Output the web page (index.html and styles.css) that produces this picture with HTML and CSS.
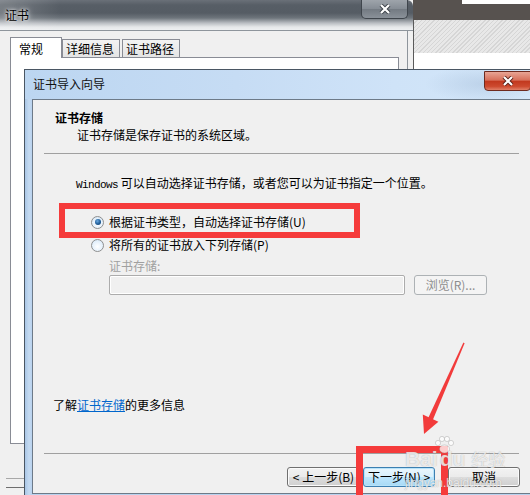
FILE: index.html
```html
<!DOCTYPE html>
<html lang="zh-CN">
<head>
    <meta charset="UTF-8">
    <title>证书导入向导</title>
    <link rel="stylesheet" href="styles.css">
</head>
<body>
<div class="desktop">

    <!-- desktop behind the windows -->
    <div class="desk-right">
        <div class="desk-bar"><span class="desk-strip"></span></div>
        <div class="desk-hatch"></div>
        <div class="desk-white"></div>
    </div>

    <!-- background window: 证书 -->
    <div class="cert-window">
        <div class="win-title">
            <span class="win-caption">证书</span>
            <span class="win-close">
                <svg width="12" height="10" viewBox="0 0 12 10"><path d="M2 1 L10 9 M10 1 L2 9" stroke="#3b4148" stroke-width="4"/><path d="M2 1 L10 9 M10 1 L2 9" stroke="#fff" stroke-width="2.2"/></svg>
            </span>
        </div>
        <div class="win-body">
            <div class="tabs">
                <span class="tab active">常规</span>
                <span class="tab">详细信息</span>
                <span class="tab">证书路径</span>
            </div>
            <div class="tab-panel"></div>
            <div class="win-footer"></div>
        </div>
    </div>

    <!-- wizard dialog -->
    <div class="wizard">
        <div class="wiz-title">
            <span class="wiz-caption">证书导入向导</span>
            <span class="wiz-close">
                <svg width="12" height="10" viewBox="0 0 12 10"><path d="M2 1 L10 9 M10 1 L2 9" stroke="#5a2018" stroke-width="4"/><path d="M2 1 L10 9 M10 1 L2 9" stroke="#fff" stroke-width="2.2"/></svg>
            </span>
        </div>
        <div class="wiz-client">
            <div class="wiz-header">
                <div class="wiz-heading">证书存储</div>
                <div class="wiz-sub">证书存储是保存证书的系统区域。</div>
            </div>
            <div class="rule"></div>

            <div class="intro"><span class="mono">Windows</span> 可以自动选择证书存储，或者您可以为证书指定一个位置。</div>

            <div class="radio first"><span class="dot checked"></span>根据证书类型，自动选择证书存储(U)</div>
            <div class="radio"><span class="dot"></span>将所有的证书放入下列存储(P)</div>

            <div class="store-label">证书存储:</div>
            <div class="store-row">
                <span class="store-input"></span>
                <span class="browse">浏览(R)...</span>
            </div>

            <div class="more">了解<a href="#">证书存储</a>的更多信息</div>
            <div class="rule bottom"></div>

            <div class="buttons">
                <span class="btn back">&lt; 上一步(B)</span>
                <span class="btn next">下一步(N) &gt;</span>
                <span class="btn cancel">取消</span>
            </div>
        </div>
    </div>

    <!-- annotations drawn over the screenshot -->
    <div class="mark mark-radio"></div>
    <div class="mark mark-next"></div>
    <svg class="arrow" width="530" height="495" viewBox="0 0 530 495">
        <polygon points="463.4,342.6 464.6,343.2 432.8,420 428.2,418" fill="#f23b3b"/>
        <polygon points="424,434 422.8,414.6 438.4,421.8" fill="#f23b3b"/>
    </svg>

    <div class="watermark">
        <div class="wm-logo">Bai<svg class="paw" width="20" height="18" viewBox="0 0 20 18"><circle cx="4" cy="7" r="2.6"/><circle cx="8" cy="3" r="2.6"/><circle cx="13" cy="3" r="2.6"/><circle cx="17" cy="7" r="2.6"/><ellipse cx="10.5" cy="13" rx="5" ry="4"/></svg>du <span class="wm-cn">经验</span></div>
        <div class="wm-url">jingyan.baidu.com</div>
    </div>
</div>
</body>
</html>
```

FILE: styles.css
```css
body {
    margin: 0;
    font-family: "Noto Sans CJK SC", "Liberation Sans", sans-serif;
    font-size: 12px;
    line-height: 16px;
    color: #000;
    background-color: #f0f0f0;
    overflow: hidden;
}
.desktop {
    position: relative;
    width: 530px;
    height: 495px;
    overflow: hidden;
}

/* desktop strip on the right */
.desk-right {
    position: absolute;
    left: 413px;
    top: 0;
    width: 117px;
}
.desk-bar {
    height: 20px;
    background-color: #57524f;
    display: flex;
    justify-content: flex-end;
}
.desk-strip {
    width: 68px;
    height: 4px;
    background-color: #fff;
}
.desk-hatch {
    height: 33px;
    border-left: 1px solid #5a5a5a;
    background: repeating-linear-gradient(135deg, #e8e8e8 0, #e8e8e8 2px, #d6d6d6 2px, #d6d6d6 3px);
}
.desk-white {
    height: 17px;
    border-left: 1px solid #5a5a5a;
    background-color: #fff;
}

/* background window */
.cert-window {
    position: absolute;
    left: 0;
    top: 0;
    width: 413px;
    height: 495px;
    background-color: #f0f0f0;
}
.win-title {
    height: 30px;
    display: flex;
    justify-content: space-between;
    align-items: flex-start;
    border-top-right-radius: 6px;
    border-bottom: 1px solid #8e959c;
    background:
        linear-gradient(90deg, rgba(255,255,255,0.2), rgba(255,255,255,0) 60px),
        linear-gradient(to bottom, #6a7078 0, #575e66 5px, #555c64 13px, #6e757c 18px, #b9bdc2 23px, #e6e8ea 27px, #eef0f2 30px);
}
.win-caption {
    padding: 7px 0 0 5px;
    text-shadow: 0 0 6px #fff, 0 0 3px #fff;
}
.win-close {
    width: 45px;
    height: 18px;
    margin-right: 5px;
    border: 1px solid #3f454c;
    border-top: none;
    border-radius: 0 0 5px 5px;
    background: linear-gradient(to bottom, #9ea4ab, #858c94 50%, #737a82 51%, #8a9199);
    display: flex;
    align-items: center;
    justify-content: center;
}
.win-body {
    padding: 6px 0 0 10px;
    margin-right: 5px;
    border-right: 1px solid #8e959c;
    height: 458px;
}
.tabs {
    display: flex;
    align-items: flex-end;
    height: 20px;
}
.tab {
    height: 17px;
    line-height: 17px;
    padding: 0 3px;
    border: 1px solid #898c95;
    border-bottom: none;
    background: linear-gradient(to bottom, #f3f3f3, #e4e4e4);
    font-size: 12px;
    width: 50px;
}
.tab + .tab {
    margin-left: 2px;
}
.tab.active {
    height: 20px;
    line-height: 22px;
    padding: 0 8px;
    width: 34px;
    background: #fff;
    position: relative;
    margin-bottom: -1px;
    z-index: 1;
}
.tab.active + .tab {
    margin-left: 0;
}
.tab-panel {
    width: 387px;
    height: 385px;
    border: 1px solid #898c95;
    background-color: #fff;
}
.win-footer {
    margin: 34px 0 0 -4px;
    height: 8px;
    border-top: 1px solid #a8a8a8;
    border-bottom: 1px solid #6e6e6e;
}

/* wizard dialog */
.wizard {
    position: absolute;
    left: 24px;
    top: 69px;
    width: 528px;
    height: 440px;
    border: 1px solid #4a5663;
    background: linear-gradient(90deg, #a9c6e6, #c4daf1 4px, #b9d2ee 7px);
}
.wiz-title {
    height: 29px;
    display: flex;
    justify-content: space-between;
    align-items: flex-start;
    background:
        radial-gradient(ellipse 60px 18px at 460px 14px, rgba(150,175,205,0.35), rgba(150,175,205,0) 100%),
        linear-gradient(90deg, #bcd6f1, #c6dcf4 40%, #cfe3f8 70%, #d4e7f9);
}
.wiz-caption {
    padding: 6px 0 0 8px;
    color: #111;
}
.wiz-close {
    width: 45px;
    height: 18px;
    margin: 1px 22px 0 0;
    border: 1px solid #6e2a1f;
    border-radius: 0 0 4px 4px;
    background: linear-gradient(to bottom, #e8a595, #d7705b 45%, #c2391f 52%, #cd4a2f 80%, #e08068);
    display: flex;
    align-items: center;
    justify-content: center;
}
.wiz-client {
    margin-left: 7px;
    height: 393px;
    border: 1px solid #6d7a88;
    background-color: #f0f0f0;
}
.wiz-header {
    padding: 10px 0 0 22px;
}
.wiz-heading {
    font-weight: bold;
}
.wiz-sub {
    margin-top: 1px;
    padding-left: 22px;
}
.rule {
    margin: 10px 0 0 11px;
    width: 475px;
    height: 1px;
    background-color: #a0a0a0;
}
.rule.bottom {
    margin-top: 40px;
}
.intro {
    margin-top: 21px;
    padding-left: 43px;
}
.mono {
    font-family: "Liberation Mono", monospace;
    font-size: 11px;
    letter-spacing: -0.6px;
}
.radio {
    margin-top: 7px;
    padding-left: 58px;
    height: 16px;
    display: flex;
    align-items: center;
}
.radio.first {
    margin-top: 21px;
}
.dot {
    width: 11px;
    height: 11px;
    margin-right: 5px;
    border: 1px solid #8e8f8f;
    border-radius: 50%;
    background: radial-gradient(circle at 50% 60%, #ffffff 0, #e4f0fb 60%, #c9ddf0 100%);
    display: flex;
    align-items: center;
    justify-content: center;
}
.dot.checked::after {
    content: "";
    width: 6px;
    height: 6px;
    border-radius: 50%;
    background: radial-gradient(circle at 40% 35%, #6aa8e0 0, #1f5d98 55%, #0c3a66 100%);
}
.store-label {
    margin-top: 5px;
    padding-left: 76px;
    color: #a0a0a0;
}
.store-row {
    margin-top: 1px;
    padding-left: 76px;
    display: flex;
}
.store-input {
    width: 294px;
    height: 18px;
    border: 1px solid #acacac;
    border-radius: 2px;
    box-shadow: inset 0 0 0 1px #fff;
    background-color: #f0f0f0;
}
.browse {
    margin-left: 9px;
    width: 71px;
    height: 18px;
    line-height: 18px;
    border: 1px solid #adb2b5;
    border-radius: 3px;
    background-color: #f4f4f4;
    color: #8d8d8d;
    text-align: center;
}
.more {
    margin-top: 102px;
    padding-left: 20px;
}
.more a {
    color: #0066cc;
}
.buttons {
    margin-top: 13px;
    padding-left: 254px;
    display: flex;
}
.btn {
    width: 70px;
    height: 18px;
    line-height: 18px;
    text-align: center;
    border: 1px solid #707070;
    border-radius: 3px;
    box-shadow: inset 0 0 0 1px #fbfbfb;
    background: linear-gradient(to bottom, #f2f2f2 0, #ebebeb 50%, #dddddd 51%, #cfcfcf 100%);
}
.btn.back {
    width: 71px;
}
.btn.next {
    margin-left: 3px;
    border-color: #3c7fb1;
    box-shadow: inset 0 0 0 1px #b7e3fa;
    background: linear-gradient(to bottom, #eaf6fd 0, #d9f0fc 50%, #bee6fd 51%, #a7d9f5 100%);
}
.btn.cancel {
    margin-left: 13px;
}

/* red annotation marks */
.mark {
    position: absolute;
    border: 6px solid #f53b3b;
    box-sizing: border-box;
}
.mark-radio {
    left: 59px;
    top: 203px;
    width: 301px;
    height: 35px;
}
.mark-next {
    left: 356px;
    top: 446px;
    width: 92px;
    height: 60px;
    border-width: 7px;
}
.arrow {
    position: absolute;
    left: 0;
    top: 0;
    pointer-events: none;
}

/* baidu watermark */
.watermark {
    position: absolute;
    left: 405px;
    top: 436px;
    color: rgba(255,255,255,0.75);
    text-shadow: 0 0 1px rgba(110,110,110,0.6);
    font-family: "Liberation Sans", "Noto Sans CJK SC", sans-serif;
}
.wm-logo {
    font-size: 21px;
    font-weight: bold;
    line-height: 30px;
    white-space: nowrap;
}
.paw {
    fill: rgba(255,255,255,0.75);
    stroke: rgba(120,120,120,0.5);
    stroke-width: 0.6;
    margin: 0 -14px 0 -4px;
    vertical-align: 12px;
}
.wm-cn {
    font-family: "Noto Sans CJK SC", sans-serif;
    font-size: 17px;
    font-weight: normal;
}
.wm-url {
    font-size: 12px;
    line-height: 12px;
    margin-top: 3px;
}
```
